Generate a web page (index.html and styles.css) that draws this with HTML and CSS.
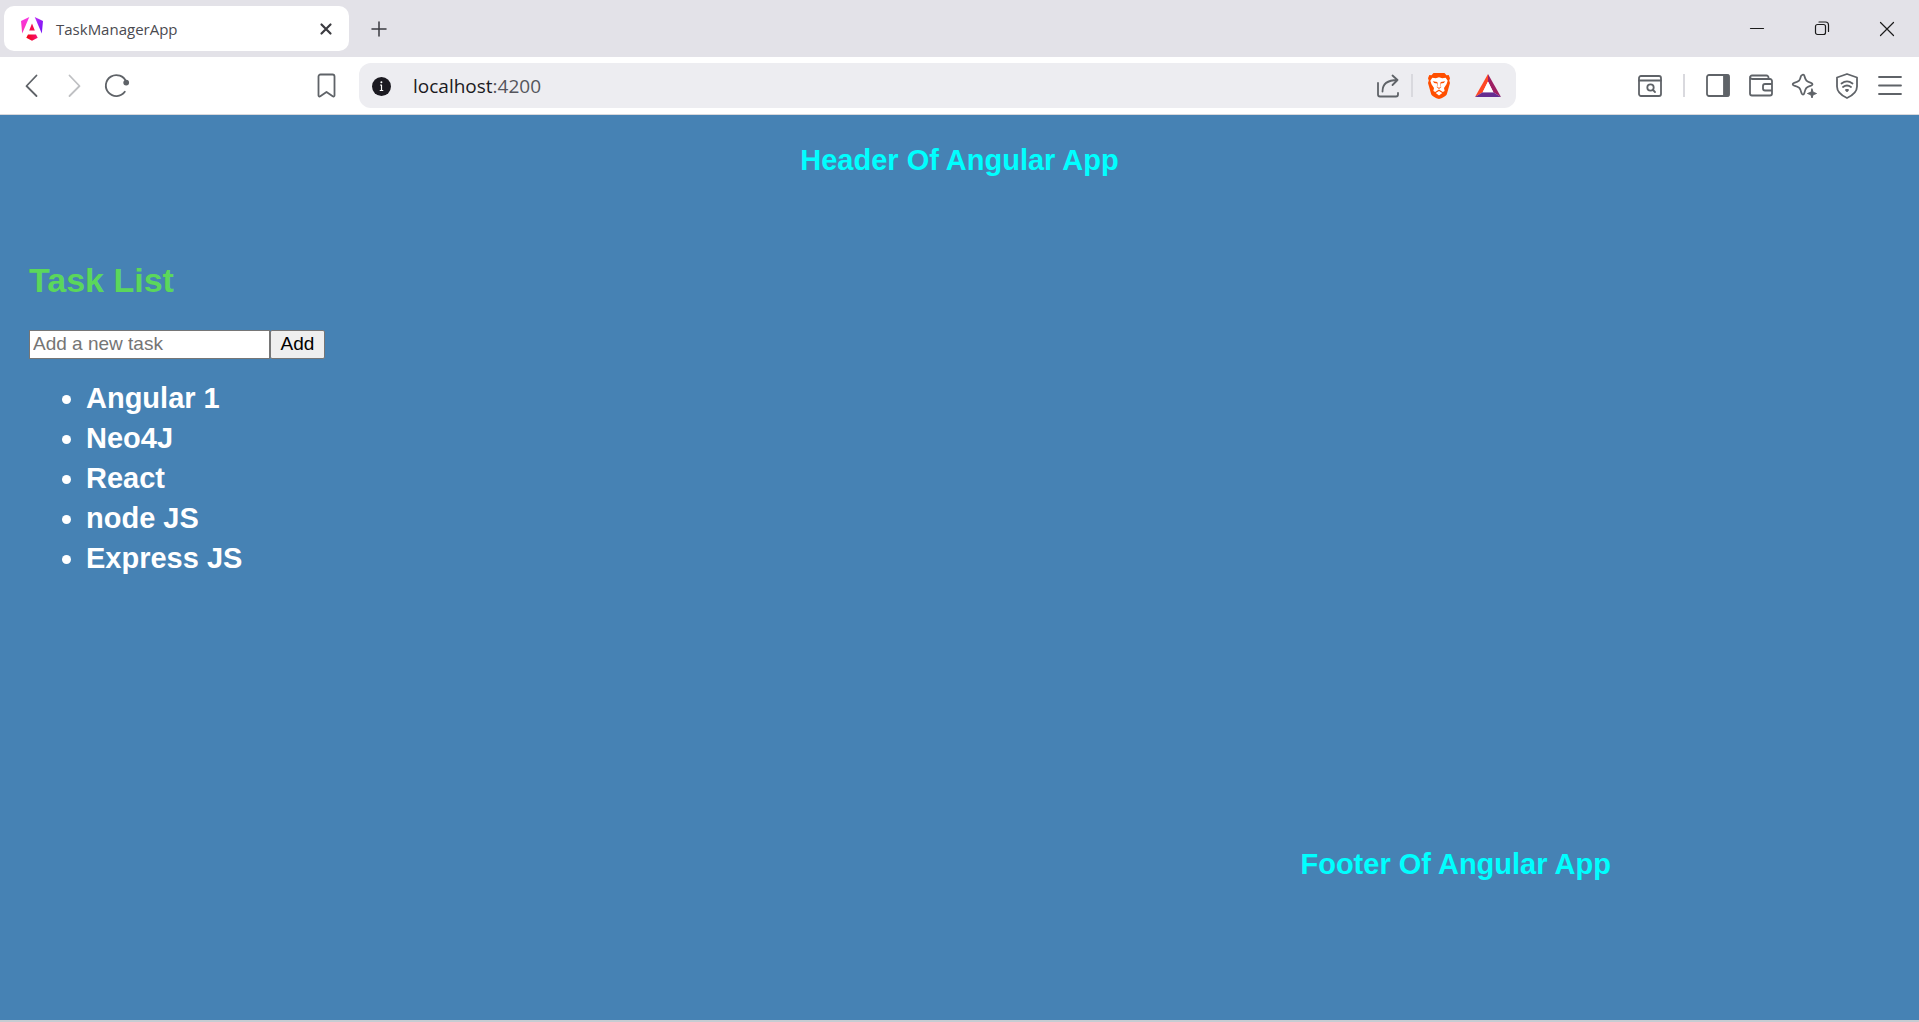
FILE: index.html
```html
<!DOCTYPE html>
<html lang="en">
<head>
<meta charset="utf-8">
<meta name="viewport" content="width=device-width, initial-scale=1">
<title>TaskManagerApp</title>
<link rel="stylesheet" href="styles.css">
</head>
<body>
<div class="browser">
  <div class="tab-strip">
    <div class="tab">
      <svg class="favicon" viewBox="0 0 22 24" aria-hidden="true">
        <defs>
          <linearGradient id="ng-left" x1="0" y1="0" x2="0" y2="1"><stop offset="0" stop-color="#f637e3"/><stop offset="1" stop-color="#fb2fb0"/></linearGradient>
          <linearGradient id="ng-right" x1="0" y1="0" x2="1" y2="1"><stop offset="0" stop-color="#c32af5"/><stop offset="1" stop-color="#6a11f5"/></linearGradient>
          <linearGradient id="ng-base" x1="0" y1="0" x2="1" y2="0"><stop offset="0" stop-color="#f0060b"/><stop offset="1" stop-color="#f8107a"/></linearGradient>
        </defs>
        <path fill="url(#ng-left)" d="M0 4 8.300 0 1.200 16.500z"/>
        <path fill="url(#ng-right)" d="M13.700 0 22 4l-1.200 12.500z"/>
        <path fill="url(#ng-base)" d="M7 17.500h8l1.700 3.200L11 23.700l-5.700-3z"/>
        <path fill="#f50f4c" d="M11 6.500 13.800 13.500H8.200z"/>
      </svg>
      <span class="tab-title">TaskManagerApp</span>
      <button class="icon-button" aria-label="Close tab"><svg viewBox="0 0 26 26"><path class="close-mark" d="m8.500 8.500 9 9M17.500 8.500l-9 9"/></svg></button>
    </div>
    <button class="icon-button new-tab" aria-label="New tab"><svg viewBox="0 0 26 26"><path d="M13 6v14M6 13h14"/></svg></button>
    <div class="window-controls">
      <button aria-label="Minimize"><svg viewBox="0 0 26 26"><path d="M6.500 12.500h13"/></svg></button>
      <button aria-label="Restore"><svg viewBox="0 0 26 26"><rect x="6.500" y="8.500" width="10" height="10" rx="2"/><path d="M10 6h6.500a3 3 0 0 1 3 3v6.500"/></svg></button>
      <button aria-label="Close"><svg viewBox="0 0 26 26"><path d="m6.500 6.500 13 13M19.500 6.500l-13 13"/></svg></button>
    </div>
  </div>

  <div class="toolbar">
    <div class="nav-tools">
      <button class="icon-button" aria-label="Back"><svg viewBox="0 0 26 26"><path d="M18.500 2.500 8.500 13l10 10"/></svg></button>
      <button class="icon-button is-disabled" aria-label="Forward" disabled><svg viewBox="0 0 26 26"><path d="m8.500 2.500 10 10.500-10 10"/></svg></button>
      <button class="icon-button" aria-label="Reload"><svg viewBox="0 0 26 26"><path d="M22.200 9A10.500 10.500 0 1 0 20.800 18.800"/><circle class="solid" cx="22.200" cy="9.600" r="2"/></svg></button>
      <button class="icon-button bookmark" aria-label="Bookmark"><svg viewBox="0 0 26 26"><path d="M7.500 1.500h12a2 2 0 0 1 2 2v19c0 1-1 1.400-1.800.8l-6.200-4.300-6.200 4.300c-.8.600-1.800.2-1.800-.8v-19a2 2 0 0 1 2-2z"/></svg></button>
    </div>

    <div class="address-bar">
      <button class="icon-button" aria-label="Site information"><svg viewBox="0 0 26 26"><circle fill="#1b1a21" stroke="none" cx="13.500" cy="13.500" r="9.500"/><path stroke="#fff" stroke-width="1.200" d="M12.500 12h1v5.500m-1.300 0h2.600"/><circle fill="#fff" stroke="none" cx="13.400" cy="9.300" r="1"/></svg></button>
      <div class="url">localhost<span class="port">:4200</span></div>
      <button class="icon-button" aria-label="Share"><svg viewBox="0 0 26 26"><path d="M3 10v11.500a2 2 0 0 0 2 2h16a2 2 0 0 0 2-2V20M7.500 18.500c0-7 4.500-11.500 15-11.500M17.500 2.500 22.500 7l-5 5"/></svg></button>
      <span class="separator"></span>
      <button class="icon-button shields" aria-label="Brave Shields"><svg viewBox="0 0 26 26">
        <path fill="#ff4f00" stroke="none" d="M7.500 0h11l2 2.300 2.200-.2L24 5.200l-.8 2.300.8 2.600-3.200 11.200c-.5 1.600-6.200 4.700-7.800 4.700s-7.300-3.100-7.800-4.700L2 10.100l.8-2.600L2 5.200l1.300-3.100 2.200.2z"/>
        <path fill="#fff" stroke="none" d="m6.300 4.700 3.500.5 3.200-.9 3.200.9 3.500-.5 2 3-1.200 3.500-2.500 3.900.6 2.900-1.800 1-3.800-2.400-3.800 2.400-1.800-1 .6-2.900-2.500-3.900-1.200-3.500zM13 18l3.300 2L13 22.500 9.700 20z"/>
        <path fill="#ff4f00" stroke="none" d="m6.800 8.200 4.400.9.500 1.100-.5 3.700 1.800.9 1.800-.9-.5-3.700.5-1.100 4.400-.9-1.400 1.800-3 .6.400 3.600-2.200 1.800-2.200-1.800.4-3.600-3-.6z"/>
      </svg></button>
      <button class="icon-button" aria-label="Brave Rewards"><svg viewBox="0 0 26 26"><path fill="#ff4724" stroke="none" d="M13 1v7.500L7.700 19.300 0 24z"/><path fill="#9e1f63" stroke="none" d="m13 1 13 23-7.700-4.700L13 8.500z"/><path fill="#662d91" stroke="none" d="m7.700 19.300h10.600L26 24H0z"/><path fill="#fff" stroke="none" d="m13 8.500 5.400 10.800H7.600z"/></svg></button>
    </div>

    <div class="extension-tools">
      <button class="icon-button" aria-label="Search page"><svg viewBox="0 0 26 26"><rect x="2" y="3" width="22" height="20" rx="2"/><path d="M2 7.500h22"/><circle cx="13.500" cy="14.500" r="3.200"/><path d="m16 17 2 2"/></svg></button>
      <span class="separator"></span>
      <button class="icon-button" aria-label="Sidebar"><svg viewBox="0 0 26 26"><rect x="2" y="2" width="22" height="21" rx="2"/><path class="solid" d="M19 2.500h4.500v20H19z"/></svg></button>
      <button class="icon-button" aria-label="Wallet"><svg viewBox="0 0 26 26"><path d="M20.500 6V4.500a2 2 0 0 0-2-2H4a2 2 0 0 0-2 2V20.500a2 2 0 0 0 2 2h18a2 2 0 0 0 2-2V8a2 2 0 0 0-2-2H4.500A2.500 2.500 0 0 1 2 4M24 11h-7a2 2 0 0 0-2 2v2.500a2 2 0 0 0 2 2h7"/></svg></button>
      <button class="icon-button" aria-label="Leo AI"><svg viewBox="0 0 26 26"><path d="M11.200 2c1-.8 2 0 2.300 1.300 1 4.200 2 5.200 6.500 6.600 2 .7 2 2 0 2.700-4.500 1.400-5.500 2.400-6.700 7.500-.5 2-2.200 2-2.800 0-1.200-5.100-2.200-6.100-7.300-7.500-2-.7-2-2 0-2.700 5.100-1.400 5.700-2.400 6.700-6.600.2-.6.600-1 1.300-1.300z"/><path class="solid" stroke-width="1" d="M21 16l1.200 3.300 3.300 1.200-3.300 1.200L21 25l-1.200-3.300-3.300-1.200 3.300-1.200z"/></svg></button>
      <button class="icon-button" aria-label="VPN"><svg viewBox="0 0 26 26"><path d="m13 1 10 3.500v9C23 19 18.500 22.500 13 25 7.500 22.500 3 19 3 13.500v-9zM7.500 10.500c3.400-2.600 7.600-2.600 11 0M9 14c2.600-2 5.400-2 8 0"/><path class="solid" d="M12 17h2l-1 1z"/></svg></button>
      <button class="icon-button" aria-label="Menu"><svg viewBox="0 0 26 26"><path d="M2 4h22M2 12.500h22M2 21h22"/></svg></button>
    </div>
  </div>
</div>

<div class="app">
  <header class="app-header"><h2>Header Of Angular App</h2></header>
  <main class="task-list">
    <h1>Task List</h1>
    <form class="task-form">
      <input type="text" placeholder="Add a new task" aria-label="Add a new task">
      <button type="button">Add</button>
    </form>
    <ul>
      <li>Angular 1</li>
      <li>Neo4J</li>
      <li>React</li>
      <li>node JS</li>
      <li>Express JS</li>
    </ul>
  </main>
  <footer class="app-footer"><h2>Footer Of Angular App</h2></footer>
</div>
</body>
</html>
```
FILE: styles.css
```css
* {
  box-sizing: border-box;
}

body {
  display: flex;
  flex-direction: column;
  min-height: 100vh;
  margin: 0;
  font-family: "Liberation Sans", Arial, sans-serif;
}

/* Browser frame */
.browser {
  font-family: "Open Sans", "Noto Sans", sans-serif;
}

.browser button {
  display: grid;
  place-items: center;
  padding: 0;
  border: 0;
  background: none;
  color: #5f6368;
}

.browser button svg {
  width: 26px;
  height: 26px;
  fill: none;
  stroke: currentColor;
  stroke-width: 1.8;
  stroke-linecap: round;
  stroke-linejoin: round;
}

.browser .solid {
  fill: currentColor;
}

.icon-button {
  flex: none;
  width: 26px;
  height: 26px;
}

.tab-strip {
  display: flex;
  align-items: center;
  gap: 17px;
  height: 57px;
  padding-left: 4px;
  background: #e3e2e8;
}

.tab {
  display: flex;
  align-items: center;
  width: 345px;
  height: 45px;
  padding: 0 10px 0 17px;
  border-radius: 10px;
  background: #fff;
}

.favicon {
  width: 22px;
  height: 24px;
}

.tab-title {
  flex: 1;
  margin-left: 13px;
  font-size: 15px;
  line-height: 20px;
  color: #4a4a50;
}

.browser .tab button,
.browser .new-tab {
  color: #3b3b40;
}

.browser .new-tab svg {
  stroke-width: 1.5;
}

.browser .tab .close-mark {
  stroke-width: 2.2;
}

.window-controls {
  display: flex;
  align-self: stretch;
  margin-left: auto;
}

.browser .window-controls button {
  width: 65px;
  color: #1b1b1b;
}

.browser .window-controls svg {
  stroke-width: 1.2;
}

.toolbar {
  display: grid;
  grid-template-columns: 359px 1fr 403px;
  align-items: center;
  height: 58px;
  border-bottom: 1px solid #d8d8dc;
  background: #fff;
}

.nav-tools,
.extension-tools {
  display: flex;
  align-items: center;
  gap: 17px;
}

.nav-tools {
  padding: 0 20px 0 18px;
}

.extension-tools {
  justify-content: flex-end;
  padding-right: 16px;
}

.browser .is-disabled {
  color: #bfc0c3;
}

.bookmark {
  margin-left: auto;
}

.address-bar {
  display: flex;
  align-items: center;
  height: 45px;
  padding: 0 15px 0 9px;
  border-radius: 12px;
  background: #ededf1;
}

.url {
  flex: 1;
  margin-left: 19px;
  font-size: 19px;
  line-height: 26px;
  color: #1b1a21;
}

.port {
  color: #55555c;
}

.separator {
  display: flex;
  justify-content: center;
  width: 8px;
}

.separator::before {
  content: "";
  width: 2px;
  height: 23px;
  background: #d9d9de;
}

.address-bar .separator {
  margin: 0 10px 0 7px;
}

.shields {
  margin-right: 23px;
}

/* Application */
.app {
  flex: 1;
  padding: 28px 29px;
  border-bottom: 2px solid #c6ccd2;
  background: steelblue;
}

.app h2 {
  margin: 0;
  font-size: 29px;
  line-height: 34px;
  color: aqua;
}

.app-header {
  text-align: center;
}

.task-list {
  margin-top: 83px;
}

.task-list h1 {
  margin: 0;
  font-size: 34px;
  line-height: 40px;
  color: #5bd75b;
}

.task-form {
  display: flex;
  margin-top: 30px;
}

.task-form input,
.task-form button {
  height: 29px;
  padding: 0 3px 2px;
  border: 1px solid #767676;
  font-family: inherit;
  font-size: 19px;
}

.task-form input {
  width: 241px;
}

.task-form button {
  width: 55px;
  border-radius: 2px;
  background: #efefef;
  color: #000;
}

.task-list ul {
  margin: 19px 0 0;
  padding-left: 57px;
  font-size: 29px;
  font-weight: bold;
  line-height: 40px;
  color: #fff;
}

.app-footer {
  margin-top: 269px;
  padding-right: 15%;
  text-align: right;
}
```
